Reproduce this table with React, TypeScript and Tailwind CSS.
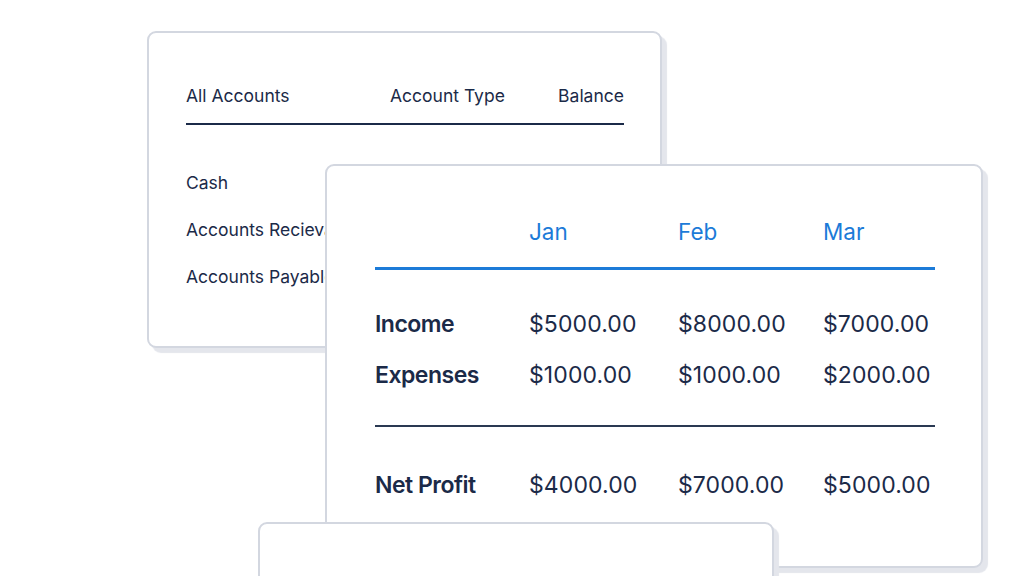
export default function App() {
  const months = ['Jan', 'Feb', 'Mar'];
  const rows = [
    { label: 'Income', values: ['$5000.00', '$8000.00', '$7000.00'] },
    { label: 'Expenses', values: ['$1000.00', '$1000.00', '$2000.00'] },
  ];
  const net = ['$4000.00', '$7000.00', '$5000.00'];
  const accounts = ['Cash', 'Accounts Recievable', 'Accounts Payable'];

  return (
    <div className="relative w-[1024px] h-[576px] overflow-hidden bg-white text-[#1b2a48] font-['Inter',sans-serif]">
      {/* Accounts card */}
      <div className="absolute left-[147px] top-[31px] w-[515px] h-[317px] rounded-[9px] border-2 border-[#d3d7e0] bg-white shadow-[5px_5px_1px_#e4e6ec] overflow-hidden">
        <div className="pl-[37px] pr-[36px] pt-[51px]">
          <div className="flex items-center text-[17.5px] leading-[24px]">
            <span className="w-[204px]">All Accounts</span>
            <span className="flex-1">Account Type</span>
            <span>Balance</span>
          </div>
          <div className="mt-[15px] h-[2px] bg-[#1b2a48]" />
          <div className="mt-[46px] flex flex-col gap-[23px] text-[17.5px] leading-[24px]">
            {accounts.map(a => (
              <span key={a} className="whitespace-nowrap">{a}</span>
            ))}
          </div>
        </div>
      </div>

      {/* Profit card */}
      <div className="absolute left-[325px] top-[164px] w-[658px] h-[404px] rounded-[9px] border-2 border-[#d3d7e0] bg-white shadow-[5px_5px_1px_#e4e6ec]">
        <div className="pl-[48px] pr-[46px] pt-[51px]">
          <div className="grid grid-cols-[154px_149px_145px_1fr] text-[22.5px] leading-[30px] text-[#1c7bd8]">
            <span />
            {months.map(m => (
              <span key={m}>{m}</span>
            ))}
          </div>
          <div className="mt-[20px] h-[3px] bg-[#1c7bd8]" />
          <div className="mt-[39px] flex flex-col gap-[21px]">
            {rows.map(r => (
              <div key={r.label} className="grid grid-cols-[154px_149px_145px_1fr] text-[23px] leading-[30px] tracking-[0.1px]">
                <span className="font-semibold tracking-[-0.5px]">{r.label}</span>
                {r.values.map((v, i) => (
                  <span key={i}>{v}</span>
                ))}
              </div>
            ))}
          </div>
          <div className="mt-[35px] h-[2px] bg-[#2a3952]" />
          <div className="mt-[43px] grid grid-cols-[154px_149px_145px_1fr] text-[23px] leading-[30px] tracking-[0.1px]">
            <span className="font-semibold tracking-[-0.5px]">Net Profit</span>
            {net.map((v, i) => (
              <span key={i}>{v}</span>
            ))}
          </div>
        </div>
      </div>

      {/* Bottom card */}
      <div className="absolute left-[258px] top-[522px] w-[516px] h-[100px] rounded-[9px] border-2 border-[#d3d7e0] bg-white shadow-[5px_5px_1px_#e4e6ec]" />
    </div>
  );
}
